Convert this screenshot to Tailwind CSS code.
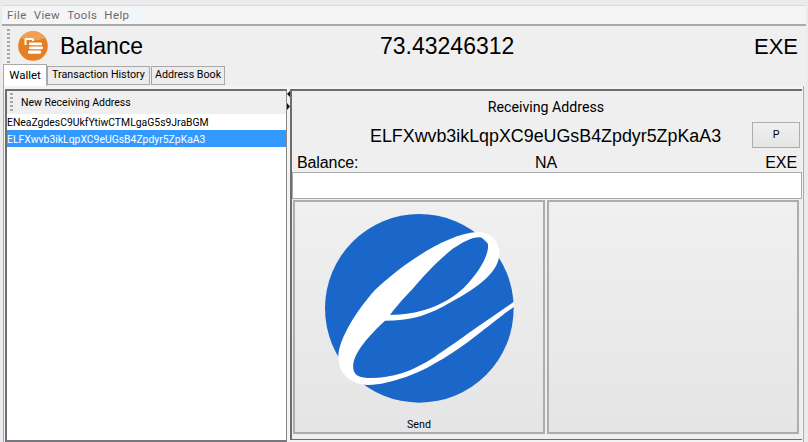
<!DOCTYPE html>
<html lang="en">
<head>
  <meta charset="UTF-8">
  <title>Wallet</title>
  <script src="https://cdn.jsdelivr.net/npm/@tailwindcss/browser@4"></script>
</head>
<body class="w-[808px] h-[442px] overflow-hidden bg-[#ebebeb] font-['Roboto',sans-serif] text-[10.7px] text-black">
  <div class="h-[442px] ml-[2px] mr-[2px] pt-[5px] flex flex-col">
    <!-- Menu -->
    <div class="h-[21px] shrink-0 bg-[#f4f5f7] border-t border-[#dcdcdc] border-b-2 border-b-[#a9a9a9] flex items-center pl-[5px] pt-px gap-[7px] text-[11.5px] text-[#6b6b6b] tracking-[0.4px]">
      <span>File</span><span>View</span><span>Tools</span><span>Help</span>
    </div>

    <!-- Balance toolbar -->
    <div class="h-[38px] shrink-0 bg-[#efefef] flex items-center pl-[5px] pr-[8px] pt-[2px] font-['Liberation_Sans',sans-serif] text-[23px]">
      <div class="w-[3px] h-[34px] bg-[repeating-linear-gradient(to_bottom,#a8a8a8_0,#a8a8a8_2px,transparent_2px,transparent_4px)]"></div>
      <svg class="ml-[7px] shrink-0" width="32" height="32" viewBox="0 0 32 32">
        <circle cx="16" cy="16" r="14.8" fill="#e67e22"/>
        <path d="M3.5 8 A14.8 14.8 0 0 1 28.5 8 Q16 13 3.5 8 Z" fill="#f0a050"/>
        <path d="M7.5 15 V9.5 Q7.5 8 9 8 H15.5 Q17 8 17 9.5 V11 H15 V10 H9.5 V15 Z" fill="#fff"/>
        <rect x="12" y="12.5" width="13" height="2.8" rx="1.2" fill="#fff"/>
        <rect x="12" y="16.5" width="14" height="2.8" rx="1.2" fill="#fff"/>
        <rect x="11" y="20.5" width="13" height="3.2" rx="1.2" fill="#fff"/>
      </svg>
      <span class="ml-[11px] w-[320px]">Balance</span>
      <span>73.43246312</span>
      <span class="ml-auto text-[22px]">EXE</span>
    </div>

    <!-- Tabs -->
    <div class="h-[22px] shrink-0 bg-[#efefef] flex items-end pl-[1px] relative z-10">
      <div class="h-[22px] w-[44px] bg-white border border-b-0 border-[#a9a9a9] flex items-center justify-center text-[11.5px]">Wallet</div>
      <div class="h-[19px] w-[103px] mb-[1px] bg-[#ececec] border border-[#a9a9a9] flex items-center justify-center">Transaction History</div>
      <div class="h-[19px] w-[74px] mb-[1px] ml-[1px] bg-[#ececec] border border-[#a9a9a9] flex items-center justify-center">Address Book</div>
    </div>

    <!-- Tab body -->
    <div class="flex-1 min-h-0 -mt-px ml-[1px] mr-[2px] bg-[#f4f4f4] border border-b-0 border-[#a9a9a9] pt-[3px] pl-[1px] pr-[1px] flex">
      <!-- Left pane -->
      <div class="w-[282px] shrink-0 flex flex-col bg-white border-l-2 border-t-2 border-[#6d6d6d] border-r border-r-[#8a8a8a] border-b-2 border-b-[#77777d]">
        <div class="h-[23px] shrink-0 bg-[#efefef] flex items-center pl-[3px]">
          <div class="w-[3px] h-[19px] bg-[repeating-linear-gradient(to_bottom,#a8a8a8_0,#a8a8a8_2px,transparent_2px,transparent_4px)]"></div>
          <span class="ml-[8px] pt-px text-[10.5px]">New Receiving Address</span>
        </div>
        <div class="h-[16px] pt-[2px] flex items-center text-[10.4px]">ENeaZgdesC9UkfYtiwCTMLgaG5s9JraBGM</div>
        <div class="h-[17px] pt-[2px] flex items-center bg-[#3399ff] text-white text-[10.4px]">ELFXwvb3ikLqpXC9eUGsB4Zpdyr5ZpKaA3</div>
      </div>

      <!-- Splitter -->
      <div class="w-[3px] shrink-0 flex flex-col items-center pt-[2px] gap-[6px]">
        <svg width="3" height="6" viewBox="0 0 3 6"><path d="M3 0 V6 L0 3 Z" fill="#111"/></svg>
        <svg width="3" height="7" viewBox="0 0 3 7"><path d="M0 0 V7 L3 3.5 Z" fill="#111"/></svg>
      </div>

      <!-- Right pane -->
      <div class="flex-1 min-w-0 mb-[2px] flex flex-col bg-[#efefef] border-l-2 border-t-2 border-[#6d6d6d] border-b border-b-[#6d6d6d]">
        <div class="h-[30px] shrink-0 flex items-end justify-center text-[14.2px] pb-[3px] pr-[2px]">Receiving Address</div>
        <div class="h-[28px] shrink-0 flex items-center font-['Liberation_Sans',sans-serif] text-[17.85px]">
          <span class="ml-[78px] pt-[3px]">ELFXwvb3ikLqpXC9eUGsB4Zpdyr5ZpKaA3</span>
          <button class="ml-auto mr-[2px] w-[48px] h-[26px] bg-gradient-to-b from-[#f0f0f0] to-[#e5e5e5] border border-[#adadad] font-['Roboto',sans-serif] text-[10.7px]">P</button>
        </div>
        <div class="h-[23px] shrink-0 grid grid-cols-3 items-center pl-[5px] pr-[5px] pt-[2px] font-['Liberation_Sans',sans-serif] text-[16px] tracking-[-0.1px]">
          <span>Balance:</span>
          <span class="text-center pr-[2px]">NA</span>
          <span class="text-right">EXE</span>
        </div>
        <div class="h-[27px] shrink-0 bg-white border border-[#a9a9a9]"></div>
        <div class="flex-1 min-h-0 mt-[1px] mb-[5px] pl-[1px] pr-[3px] flex gap-[2px]">
          <button class="relative flex-1 bg-gradient-to-b from-[#f0f0f0] to-[#e5e5e5] border-2 border-[#adadad]">
            <svg class="absolute left-[15px] top-[-2px]" width="220" height="242" viewBox="0 0 660 726">
              <circle cx="328" cy="325" r="283" fill="#1b66c9"/>
              <path fill="#fff" fill-rule="evenodd" d="M612 305 C570 335 520 368 475 400 C430 433 400 452 375 470 C340 492 310 508 275 520 C230 533 170 540 145 528 C125 518 125 490 140 462 C160 425 190 395 225 362 C260 362 295 358 325 350 C365 338 395 322 425 305 C480 275 568 225 568 160 C568 115 535 95 500 96 C420 100 290 180 195 270 C140 330 85 420 85 470 C85 515 115 552 175 555 C210 555 245 545 275 535 C310 525 345 508 375 490 C410 470 440 450 475 425 C520 392 570 350 612 320 Z M240 345 C260 318 285 290 305 270 C340 228 385 180 430 145 C470 118 510 100 530 120 C545 145 520 205 460 265 C400 320 320 345 240 345 Z"/>
            </svg>
            <span class="absolute left-0 right-0 bottom-0 text-[10.7px] leading-[15px]">Send</span>
          </button>
          <button class="flex-1 bg-gradient-to-b from-[#f0f0f0] to-[#e5e5e5] border-2 border-[#adadad]"></button>
        </div>
      </div>
    </div>
  </div>
</body>
</html>
